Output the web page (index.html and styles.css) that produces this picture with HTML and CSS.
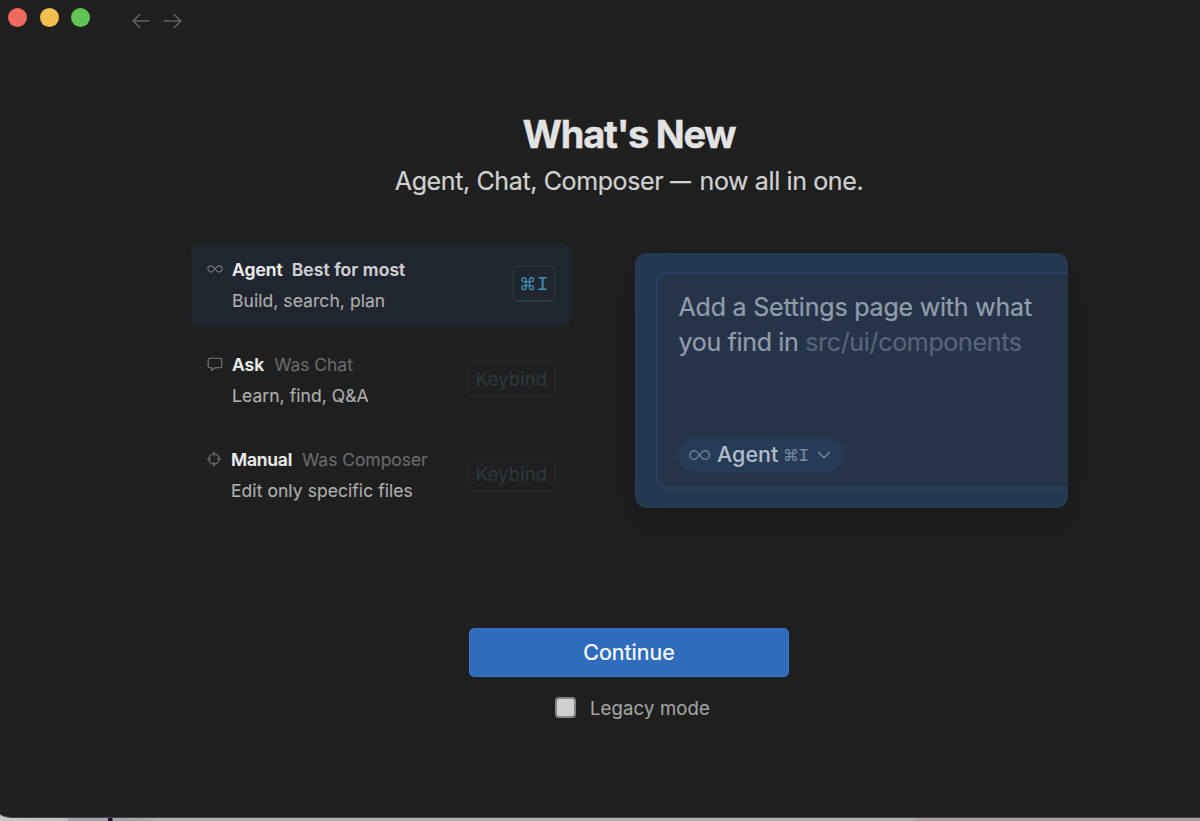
FILE: index.html
```html
<!DOCTYPE html>
<html lang="en">
<head>
<meta charset="utf-8">
<title>What's New</title>
<link rel="stylesheet" href="styles.css">
</head>
<body>
<div class="desktop">
<div class="window">
  <header class="titlebar">
    <div class="lights"><span class="light red"></span><span class="light yellow"></span><span class="light green"></span></div>
    <nav class="nav">
      <svg width="19" height="16" viewBox="0 0 19 16"><path d="M17.600 8H1.300M8 1.200 1.200 8 8 14.800"/></svg>
      <svg width="19" height="16" viewBox="0 0 19 16"><path d="M1 8h16.500M11 1.200 17.800 8 11 14.800"/></svg>
    </nav>
  </header>
  <main class="content">
    <h1 class="title"><span>What's New</span></h1>
    <p class="subtitle"><span>Agent, Chat, Composer <span class="dash">—</span> now all in one.</span></p>
    <div class="columns">
      <div class="modes">
        <section class="mode active">
          <svg class="icon" width="16" height="16" viewBox="0 0 16 16"><path d="M8 8C6.700 6.200 5.600 4.900 4 4.900a3.100 3.100 0 0 0 0 6.200C5.600 11.100 6.700 9.800 8 8s2.400-3.100 4-3.100a3.100 3.100 0 0 1 0 6.200C10.400 11.100 9.300 9.800 8 8Z"/></svg>
          <div class="text">
            <div class="head"><b>Agent</b><span class="best">Best for most</span></div>
            <div class="desc">Build, search, plan</div>
          </div>
          <kbd class="key shortcut"><span class="cmd">⌘</span><span class="mono">I</span></kbd>
        </section>
        <section class="mode">
          <svg class="icon" width="16" height="16" viewBox="0 0 16 16"><path d="M3 2.200h10a1.800 1.800 0 0 1 1.800 1.800v6a1.800 1.800 0 0 1-1.800 1.800H8L4.800 14.400v-2.600H3A1.800 1.800 0 0 1 1.200 10V4A1.800 1.800 0 0 1 3 2.200Z"/></svg>
          <div class="text">
            <div class="head"><b>Ask</b><span class="was">Was Chat</span></div>
            <div class="desc">Learn, find, Q&amp;A</div>
          </div>
          <kbd class="key unset"><span>Keybind</span></kbd>
        </section>
        <section class="mode manual">
          <svg class="icon" width="16" height="16" viewBox="0 0 16 16"><circle cx="8" cy="8" r="5.200"/><path d="M8 .8v4.400M8 10.800v4.400M.8 8h4.400M10.800 8h4.400"/></svg>
          <div class="text">
            <div class="head"><b>Manual</b><span class="was">Was Composer</span></div>
            <div class="desc">Edit only specific files</div>
          </div>
          <kbd class="key unset"><span>Keybind</span></kbd>
        </section>
      </div>
      <div class="preview">
        <div class="composer">
          <div class="prompt"><div class="line1">Add a Settings page with what</div><div class="line2">you find in <span class="path">src/ui/components</span></div></div>
          <div class="pill">
            <svg class="inf" width="21" height="14" viewBox="0 0 21 14"><path d="M10.500 7C8.600 4.300 7.200 2.600 5.100 2.600a4.400 4.400 0 0 0 0 8.800C7.200 11.400 8.600 9.700 10.500 7s3.300-4.400 5.400-4.400a4.400 4.400 0 0 1 0 8.800C13.800 11.400 12.400 9.700 10.500 7Z"/></svg>
            <span class="pill-name">Agent</span>
            <span class="pill-key"><span class="cmd">⌘</span><span class="mono">I</span></span>
            <svg class="chev" width="14" height="8" viewBox="0 0 14 8"><path d="M1.500 1 7 6.700 12.500 1"/></svg>
          </div>
        </div>
      </div>
    </div>
    <button class="continue"><span>Continue</span></button>
    <label class="legacy"><span class="box"></span><span class="legacy-text">Legacy mode</span></label>
  </main>
</div>
</div>
</body>
</html>
```
FILE: styles.css
```css
* { box-sizing: border-box; }
body { margin: 0; overflow: hidden; font-family: Inter, "Liberation Sans", sans-serif; }
.desktop { height: 821px; overflow: hidden; background: linear-gradient(90deg, #c8c8c8 0, #c0c0c0 68px, #a4a4aa 68px, #a4a4aa 108px, #160c35 108px, #160c35 112px, #a4a2aa 113px, #aaa 152px, #b2b2b2 155px, #b0b0b0 910px, #ad9fa0 920px, #ad9fa0 1200px); }
.window { width: 1270px; height: 818px; margin-left: -12px; padding-left: 12px; background: #1f1f1f; border-bottom: 1px solid #454545; border-radius: 0 0 0 24px; }
.titlebar { height: 42px; display: flex; align-items: flex-start; padding: 8px 0 0 8px; gap: 42px; }
.lights { display: flex; gap: 12.500px; }
.light { width: 19px; height: 19px; border-radius: 50%; }
.red { background: #ed6a5e; }
.yellow { background: #f5bf4f; }
.green { background: #61c554; }
.nav { display: flex; gap: 12px; padding-top: 5px; }
svg { fill: none; stroke: #616161; stroke-width: 1.6; flex: none; display: block; }
.content { display: flex; flex-direction: column; align-items: center; padding-top: 66px; }
.title { margin: 0; font-size: 38px; line-height: 52px; font-weight: 700; color: #e3e3e3; letter-spacing: -1.250px; white-space: nowrap; -webkit-text-stroke: .4px #e3e3e3; }
.subtitle { margin: 3px 0 0; font-size: 25px; line-height: 36px; color: #d0d0d0; letter-spacing: -.380px; white-space: nowrap; -webkit-text-stroke: .2px; }
.dash { display: inline-block; width: 23px; transform: scaleX(.84); transform-origin: left; }
.columns { width: 1258px; display: flex; align-items: flex-start; padding: 45px 0 0 191px; gap: 64px; height: 429px; }
.modes { width: 380px; display: flex; flex-direction: column; gap: 13px; }
.mode { height: 82px; border-radius: 9px; padding: 0 16px; display: flex; align-items: center; }
.active { background: #20262f; }
.icon { align-self: flex-start; margin: 17px 9px 0 0; stroke: #777; stroke-width: 1.1; }
.manual .icon { margin-left: -1px; }
.text { flex: 1; align-self: flex-start; padding-top: 10px; white-space: nowrap; font-size: 17.500px; -webkit-text-stroke: .15px; }
.head { display: flex; line-height: 31px; gap: 10px; }
.head b { font-weight: 600; color: #ececec; }
.manual b { letter-spacing: -.200px; }
.best { font-weight: 600; color: #cfd1d4; margin-left: -1px; letter-spacing: .080px; }
.was { color: #696969; letter-spacing: -.050px; }
.desc { line-height: 31px; color: #adadad; letter-spacing: .060px; }
.key { height: 36px; border: 1.500px solid; border-radius: 5px; display: flex; align-items: center; justify-content: center; font-family: inherit; margin-top: -2px; flex: none; white-space: nowrap; }
.shortcut { width: 42px; color: #418fb0; border-color: #2a3e4a; border-bottom-width: 2px; font-size: 17px; }
.unset { width: 87px; color: #28393f; border-color: #242627; border-bottom-width: 2px; font-size: 18.500px; letter-spacing: .100px; }
.mono { font-family: "Liberation Mono", monospace; font-size: 1.200em; line-height: 1; padding-top: 3px; }
.preview { width: 433px; height: 255px; margin-top: 9px; border-radius: 12px; overflow: hidden; background: #263952; padding: 19px 0 0 21px; box-shadow: 0 14px 34px rgba(0,0,0,.2); }
.composer { width: 440px; height: 217px; border: 2px solid #28405e; border-radius: 12px; background: #263449; padding: 16px 0 0 21px; display: flex; flex-direction: column; align-items: flex-start; }
.prompt { height: 148px; font-size: 25px; line-height: 35px; color: #929dac; white-space: nowrap; letter-spacing: -.200px; margin-left: -.500px; -webkit-text-stroke: .2px; }
.line2 { letter-spacing: -.330px; }
.path { color: #576579; }
.pill { width: 166px; height: 34px; border-radius: 17px; background: #263b55; display: flex; align-items: center; padding-left: 11px; margin-left: -1px; white-space: nowrap; }
.pill svg { stroke: #7a899c; stroke-width: 1.300; }
.pill-name { margin: -2px 0 0 7px; width: 66px; font-size: 21.500px; font-weight: 500; color: #b1bccb; }
.pill-key { width: 34px; font-size: 16px; color: #7a899c; display: flex; align-items: center; }
.pill-key .mono { margin-left: -1px; }
.continue { width: 320px; height: 49px; border: 1px solid #3c74bd; border-radius: 5px; background: #306cbd; color: #fff; font-family: inherit; font-size: 21.500px; padding: 0 0 2px; -webkit-text-stroke: .2px; }
.legacy { display: flex; align-items: center; gap: 14px; margin: 15px 0 0 7px; height: 30px; }
.box { width: 21px; height: 21px; border: 2px solid #858585; border-radius: 4px; background: #d0d0d0; }
.legacy-text { font-size: 18.500px; color: #a3a3a3; white-space: nowrap; letter-spacing: .180px; padding-top: 1px; -webkit-text-stroke: .15px; }
```
